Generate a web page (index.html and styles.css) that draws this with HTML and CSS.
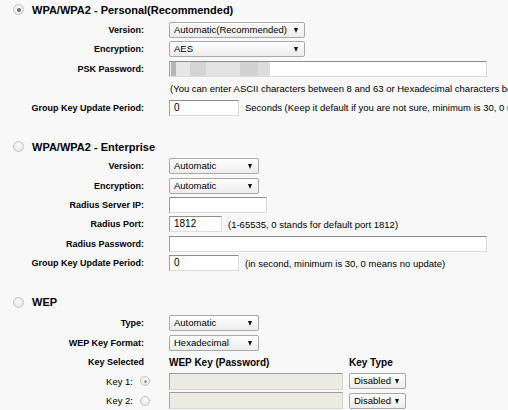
FILE: index.html
```html
<!DOCTYPE html>
<html>
<head>
<meta charset="utf-8">
<link rel="stylesheet" href="styles.css">
</head>
<body>
<div class="page">
  <section class="sec">
    <div class="sec-head"><span class="radio on"></span><span class="sec-title">WPA/WPA2 - Personal(Recommended)</span></div>
    <div class="form">
      <div class="lbl">Version:</div>
      <div class="ctl"><span class="select w135">Automatic(Recommended)</span></div>
      <div class="lbl">Encryption:</div>
      <div class="ctl"><span class="select w135">AES</span></div>
      <div class="lbl">PSK Password:</div>
      <div class="ctl"><span class="input w318 psk"></span></div>
      <div class="lbl"></div>
      <div class="ctl"><span class="note">(You can enter ASCII characters between 8 and 63 or Hexadecimal characters between 8 and 64.)</span></div>
      <div class="lbl">Group Key Update Period:</div>
      <div class="ctl"><span class="input w70">0</span><span class="note">Seconds (Keep it default if you are not sure, minimum is 30, 0 means no update)</span></div>
    </div>
  </section>

  <section class="sec">
    <div class="sec-head"><span class="radio"></span><span class="sec-title">WPA/WPA2 - Enterprise</span></div>
    <div class="form">
      <div class="lbl">Version:</div>
      <div class="ctl"><span class="select w90">Automatic</span></div>
      <div class="lbl">Encryption:</div>
      <div class="ctl"><span class="select w90">Automatic</span></div>
      <div class="lbl">Radius Server IP:</div>
      <div class="ctl"><span class="input w98"></span></div>
      <div class="lbl">Radius Port:</div>
      <div class="ctl"><span class="input w53">1812</span><span class="note">(1-65535, 0 stands for default port 1812)</span></div>
      <div class="lbl">Radius Password:</div>
      <div class="ctl"><span class="input w318"></span></div>
      <div class="lbl">Group Key Update Period:</div>
      <div class="ctl"><span class="input w70">0</span><span class="note">(in second, minimum is 30, 0 means no update)</span></div>
    </div>
  </section>

  <section class="sec">
    <div class="sec-head"><span class="radio"></span><span class="sec-title">WEP</span></div>
    <div class="form">
      <div class="lbl">Type:</div>
      <div class="ctl"><span class="select w90">Automatic</span></div>
      <div class="lbl">WEP Key Format:</div>
      <div class="ctl"><span class="select w90">Hexadecimal</span></div>
      <div class="lbl">Key Selected</div>
      <div class="ctl keys"><span class="col-key th">WEP Key (Password)</span><span class="th">Key Type</span></div>
      <div class="lbl key-lbl"><span class="plain">Key 1:</span><span class="radio small on"></span></div>
      <div class="ctl keys"><span class="input col-key disabled"></span><span class="select w58">Disabled</span></div>
      <div class="lbl key-lbl"><span class="plain">Key 2:</span><span class="radio small"></span></div>
      <div class="ctl keys"><span class="input col-key disabled"></span><span class="select w58">Disabled</span></div>
    </div>
  </section>
</div>
</body>
</html>
```

FILE: styles.css
```css
html, body {
  margin: 0;
  padding: 0;
  background: #f8f8f8;
  overflow: hidden;
}
body {
  width: 508px;
  height: 410px;
  font-family: "Liberation Sans", Arial, sans-serif;
  color: #000;
}
.page {
  display: flex;
  flex-direction: column;
}
.sec {
  display: flex;
  flex-direction: column;
  margin-bottom: 19.8px;
}
.sec:first-child .form {
  padding-top: 1px;
}
.sec:last-child {
  margin-bottom: 0;
}
.sec:last-child .form {
  padding-top: 1.5px;
}
.sec-head {
  height: 19.4px;
  display: flex;
  align-items: center;
}
.sec-title {
  font-weight: bold;
  font-size: 11px;
  margin-left: 8px;
}
.sec-head .radio {
  margin-left: 13px;
}
.radio {
  width: 11px;
  height: 11px;
  box-sizing: border-box;
  border-radius: 50%;
  border: 1px solid #c4c4c4;
  background: radial-gradient(circle at 50% 35%, #fafafa 0%, #e2e2e2 100%);
  position: relative;
  flex: none;
}
.radio.on::after {
  content: "";
  position: absolute;
  left: 50%;
  top: 50%;
  width: 4px;
  height: 4px;
  margin: -2px 0 0 -2px;
  border-radius: 50%;
  background: #6a6a6a;
}
.radio.small {
  width: 10px;
  height: 10px;
}
.radio.small.on::after {
  width: 3px;
  height: 3px;
  margin: -1.5px 0 0 -1.5px;
  background: #999;
}
.form {
  display: grid;
  grid-template-columns: 144px 1fr;
  column-gap: 25px;
  grid-auto-rows: 19.4px;
}
.lbl {
  font-weight: bold;
  font-size: 9px;
  text-align: right;
  display: flex;
  align-items: center;
  justify-content: flex-end;
  white-space: nowrap;
}
.ctl {
  display: flex;
  align-items: center;
  white-space: nowrap;
  min-width: 0;
}
.note {
  font-size: 9.5px;
  margin-left: 6px;
}
.form > .ctl > .note:first-child {
  margin-left: 1px;
}
.select {
  height: 16px;
  box-sizing: border-box;
  border: 1px solid #a9a9a9;
  border-radius: 2px;
  background: linear-gradient(#ffffff, #ececec);
  font-size: 9.5px;
  line-height: 14px;
  padding-left: 4px;
  position: relative;
  flex: none;
}
.select::after {
  content: "";
  position: absolute;
  right: 6px;
  top: 5px;
  border-left: 2.5px solid transparent;
  border-right: 2.5px solid transparent;
  border-top: 5px solid #111;
}
.w135 { width: 136px; }
.w90 { width: 90px; }
.w58 { width: 57px; }
.input {
  height: 16px;
  box-sizing: border-box;
  border: 1px solid;
  border-color: #8e8e8e #dcdcdc #dcdcdc #a0a0a0;
  background: #fff;
  font-size: 10px;
  line-height: 14px;
  padding-left: 4px;
  flex: none;
}
.w318 { width: 318px; }
.w70 { width: 70px; }
.w98 { width: 98px; }
.w53 { width: 53px; }
.psk {
  background: linear-gradient(90deg,
    #f4f4f4 0px, #f4f4f4 1px,
    #b5b5b5 1px, #b5b5b5 6px,
    #e6e6e6 6px, #e6e6e6 20px,
    #d4d4d4 20px, #d4d4d4 36px,
    #e3e3e3 36px, #e3e3e3 70px,
    #d2d2d2 70px, #d2d2d2 88px,
    #dcdcdc 88px, #dcdcdc 100px,
    #ffffff 100px);
}
.keys {
  gap: 6px;
}
.col-key {
  width: 174px;
  flex: none;
}
.th {
  font-weight: bold;
  font-size: 10px;
}
.input.disabled {
  background: #ebebe4;
  height: 17px;
  border-color: #9c9c9c #d6d6d0 #d6d6d0 #a6a6a6;
}
.key-lbl {
  gap: 7px;
  margin-right: -6px;
}
.plain {
  font-weight: normal;
  font-size: 9.5px;
}
```
